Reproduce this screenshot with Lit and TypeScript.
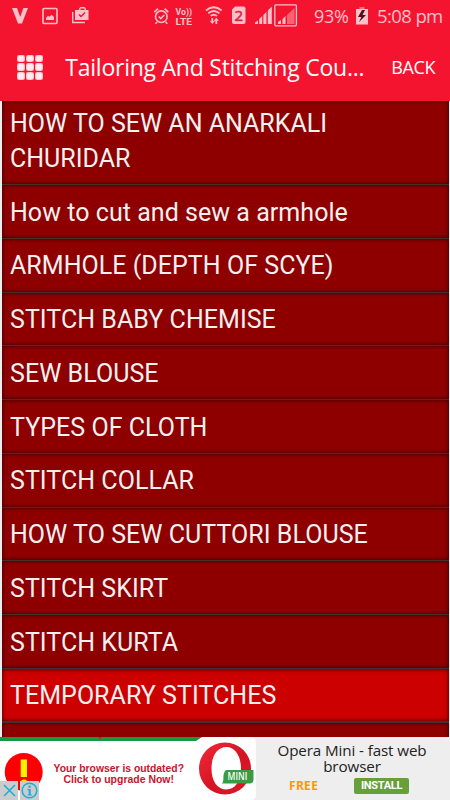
import { LitElement, html, css } from "lit";
import { customElement } from "lit/decorators.js";
import { classMap } from "lit/directives/class-map.js";

@customElement("status-bar")
class StatusBar extends LitElement {
  static styles = css`
    :host { display: flex; height: 32px; color: #ffc0ca; font-family: "Open Sans", "Noto Sans", sans-serif; }
    svg { display: block; flex: none; width: 312px; height: 32px; }
    .battery { width: 14px; margin-left: 4px; }
    .pct { width: 38px; margin-left: 2px; font-size: 18px; line-height: 33px; letter-spacing: -0.3px; white-space: nowrap; }
    .time { margin-left: 7px; font-size: 18.5px; line-height: 32px; letter-spacing: -0.6px; white-space: nowrap; }
    .lte { font: bold 9.5px Roboto, sans-serif; }
    .two { font: 15px "Open Sans", sans-serif; }
  `;
  render() {
    return html`
      <svg viewBox="0 0 312 32" fill="#ffc0ca">
        <path d="M12 8h5l3.2 9 3.2-9H28l-6 15.5h-4z" />
        <rect x="43" y="8.5" width="14" height="15" rx="1" fill="none" stroke="#ffc0ca" stroke-width="1.6" />
        <path d="M46 20v-2l2-2.2 1.5 1 2-2 2.5 2.2V20z" />
        <path d="M75 10h4V8.5L80.5 7h4L86 8.500V10h2.500v10H75zM80.500 10h4V8.500h-4z" fill-rule="evenodd" />
        <path d="m79 14.500 2 2 4-4" fill="none" stroke="#f5142f" stroke-width="1.4" />
        <path d="M72.700 12v10.500H85" fill="none" stroke="#ffc0ca" stroke-width="1.4" />
        <g fill="none" stroke="#ffc0ca" stroke-width="1.6">
          <circle cx="161.300" cy="16.700" r="5.800" />
          <path d="m154.300 12.200 3.700-3.500M168.300 12.200l-3.700-3.500M157 22l-1.500 1.800M165.700 22l1.500 1.800M158.800 16.500l2 2 3.500-3.500" />
        </g>
        <text class="lte" x="175.500" y="15" textLength="16.500" lengthAdjust="spacingAndGlyphs">Vo))</text>
        <text class="lte" x="175.500" y="24.800" textLength="16.500" lengthAdjust="spacingAndGlyphs">LTE</text>
        <g fill="none" stroke="#ffc0ca" stroke-width="1.8">
          <path d="M206 10.500q7.800-6.500 15.600 0M208.300 13.300q5.500-4.700 11 0M210.700 16q3.100-2.600 6.200 0" />
        </g>
        <path d="M211.400 18h1.800v3h1.600l-2.500 3-2.500-3h1.600zM215.400 24h1.800v-3.300h1.600l-2.500-3-2.500 3h1.600z" />
        <path d="M235 6.500h8.500q2 0 2 2v13.500q0 2-2 2H234q-2 0-2-2V9.500z" />
        <text class="two" x="234.600" y="20.800" fill="#d8283e" stroke="#d8283e" stroke-width=".6">2</text>
        <path d="M255 24v-1.500l3-2V24zM259.200 24v-5l3-3v8zM263.400 24v-9l3-3v12zM267.800 24V10.500l4-4V24z" />
        <rect x="274.800" y="4.800" width="21.600" height="21" rx="1" fill="none" stroke="#ffc0ca" stroke-width="1.300" />
        <path d="M278 24v-2l3-2v4zM282.500 24v-5l3-3v8z" />
        <path d="M287 24v-9l7.500-7v16z" opacity=".45" />
      </svg>
      <span class="pct">93%</span>
      <svg class="battery" viewBox="0 0 14 32"><path d="M0 9h12v15.500H0z" fill="#ffc0ca" /><path d="M3.500 7h5v2h-5z" fill="#fa6c80" /><path d="m6 10-4 7h3.400L3 22l7-7H6.500L9 10z" fill="#50101b" /></svg>
      <span class="time">5:08 pm</span>
    `;
  }
}

@customElement("title-bar")
class TitleBar extends LitElement {
  static styles = css`
    :host { display: flex; height: 69px; color: #fff; font-family: "Open Sans", "Noto Sans", sans-serif; line-height: 70px; white-space: nowrap; }
    .grid { display: grid; grid-template-columns: repeat(3, 8px); grid-auto-rows: 7.6px; gap: 1.4px; margin: 22.5px 22px 0 16.5px; height: 26px; }
    .cell { background: #ffeef0; border-radius: 2px; box-shadow: inset 0 0 1.5px #f5142f; }
    .title { width: 327px; font-size: 23px; letter-spacing: -0.24px; font-weight: 500; }
    .back { margin-left: -1px; font-size: 18px; letter-spacing: -0.4px; font-weight: 500; }
  `;
  render() {
    return html`
      <div class="grid">${Array.from({ length: 9 }, () => html`<i class="cell"></i>`)}</div>
      <span class="title">Tailoring And Stitching Cou...</span>
      <span class="back">BACK</span>
    `;
  }
}

@customElement("ad-banner")
class AdBanner extends LitElement {
  static styles = css`
    :host { display: flex; height: 63px; background: #eee; }
    svg { display: block; flex: none; }
    .warn { font: bold 10.6px "Liberation Sans", Arial, sans-serif; fill: #c9142c; }
    .mini { font: 600 10px "Open Sans", sans-serif; fill: #fff; }
    .info { flex: 1; font-family: "Open Sans", sans-serif; color: #222; }
    .name { margin: 5px 6px 0 4px; text-align: center; font-size: 15.2px; line-height: 16px; letter-spacing: -0.11px; white-space: nowrap; }
    .line { height: 16px; }
    .actions { display: flex; align-items: center; margin: 3px 0 0 33px; height: 17px; }
    .free { width: 65px; color: #ff9800; font: bold 12px/17px "Open Sans", sans-serif; letter-spacing: 0.3px; }
    .install { width: 55px; height: 16px; border-radius: 2px; background: #67a03a; color: #fff; text-align: center; font: bold 11px/16px Roboto, sans-serif; letter-spacing: -0.3px; }
  `;
  render() {
    return html`
      <svg width="256" height="63" viewBox="0 0 256 63">
        <path d="M0 0h256v63H0z" fill="#eee" />
        <path d="M0 0h200v63H0z" fill="#fff" />
        <path d="M0 0h204l-7 4H0z" fill="#14993e" />
        <path d="M98.500 0h3l-1.500 3z" fill="#d71a20" />
        <circle cx="23.700" cy="35" r="19" fill="#fc0004" />
        <path d="M20.700 22.500h6.300V40h-6.300z" fill="#fff200" />
        <circle cx="24" cy="46" r="3.500" fill="#fff200" />
        <path d="M0 44h18v19H0zM20 44h19v19H20z" fill="#ccc" />
        <g fill="none" stroke="#10b3d7" stroke-width="1.500"><path d="m4 48 11 11M15 48 4 59" /><circle cx="29.500" cy="53.500" r="7.300" /></g>
        <path d="M28.500 48.500h2.200v2.200h-2.200zM27.500 52h3.200v5.500H32v1h-4.500v-1h1.200v-4.200h-1.200z" fill="#10b3d7" />
        <text class="warn" x="53.500" y="34.500" textLength="130.500" lengthAdjust="spacingAndGlyphs">Your browser is outdated?</text>
        <text class="warn" x="63.500" y="45.500" textLength="110.500" lengthAdjust="spacingAndGlyphs">Click to upgrade Now!</text>
        <path d="M202 0h48q6 0 6 6v51q0 6-6 6h-48q-6 0-6-6V4z" fill="#fff" />
        <defs><linearGradient id="ring" x1="0" y1="0" x2="1" y2="1"><stop stop-color="#f2293b" /><stop offset=".55" stop-color="#d51323" /><stop offset="1" stop-color="#d91b2c" /></linearGradient></defs>
        <path d="M225 5.500a26 26 0 1 1 0 52 26 26 0 1 1 0-52zM226.500 10c-9 0-15 8.500-15 21.500s6 21 15 21c8.500 0 14.500-8.500 14.500-21s-6-21.500-14.500-21.500z" fill="url(#ring)" fill-rule="evenodd" />
        <path d="M226 33h27.500v9.500q0 4-4 4H222c3-3-.5-9.500 4-13.500z" fill="#399b43" />
        <text class="mini" x="227.500" y="43.300" textLength="19.800" lengthAdjust="spacingAndGlyphs">MINI</text>
      </svg>
      <div class="info">
        <div class="name"><div class="line">Opera Mini - fast web</div><div class="line">browser</div></div>
        <div class="actions"><span class="free">FREE</span><span class="install">INSTALL</span></div>
      </div>
    `;
  }
}

@customElement("app-root")
class AppRoot extends LitElement {
  static styles = css`
    :host { display: flex; flex-direction: column; width: 450px; height: 800px; overflow: hidden; background: #eee; }
    .top { flex: none; height: 101px; background: #f5142f; }
    .list { flex: none; height: 636px; margin: 0 1px 0 1.5px; overflow: hidden; background: #8e0000; }
    .row { box-sizing: border-box; height: 53.75px; padding: 9.6px 8.5px 0; background: #8e0000; color: #f7f0f0; font: 25px/35px Roboto, sans-serif; letter-spacing: 0.04px; white-space: nowrap; border-bottom: 1px solid #44302f; box-shadow: inset 0 0 4px #300000; }
    .first { height: 84px; padding-top: 5.4px; letter-spacing: 0; }
    .active { background: #cd0000; border-bottom-width: 2px; }
    .edge { height: 1px; flex: none; background: #cdbcbc; }
    ad-banner { margin-top: -1px; height: 63px; }
  `;
  rows = ["HOW TO SEW AN ANARKALI\nCHURIDAR", "How to cut and sew a armhole", "ARMHOLE (DEPTH OF SCYE)", "STITCH BABY CHEMISE", "SEW BLOUSE", "TYPES OF CLOTH", "STITCH COLLAR", "HOW TO SEW CUTTORI BLOUSE", "STITCH SKIRT", "STITCH KURTA", "TEMPORARY STITCHES", ""];
  render() {
    return html`
      <div class="top"><status-bar></status-bar><title-bar></title-bar></div>
      <div class="list">${this.rows.map((t, i) => html`<div class=${classMap({ row: true, first: i === 0, active: i === 10 })}>${t.split("\n").map((l) => html`<div>${l}</div>`)}</div>`)}</div>
      <div class="edge"></div>
      <ad-banner></ad-banner>
    `;
  }
}
